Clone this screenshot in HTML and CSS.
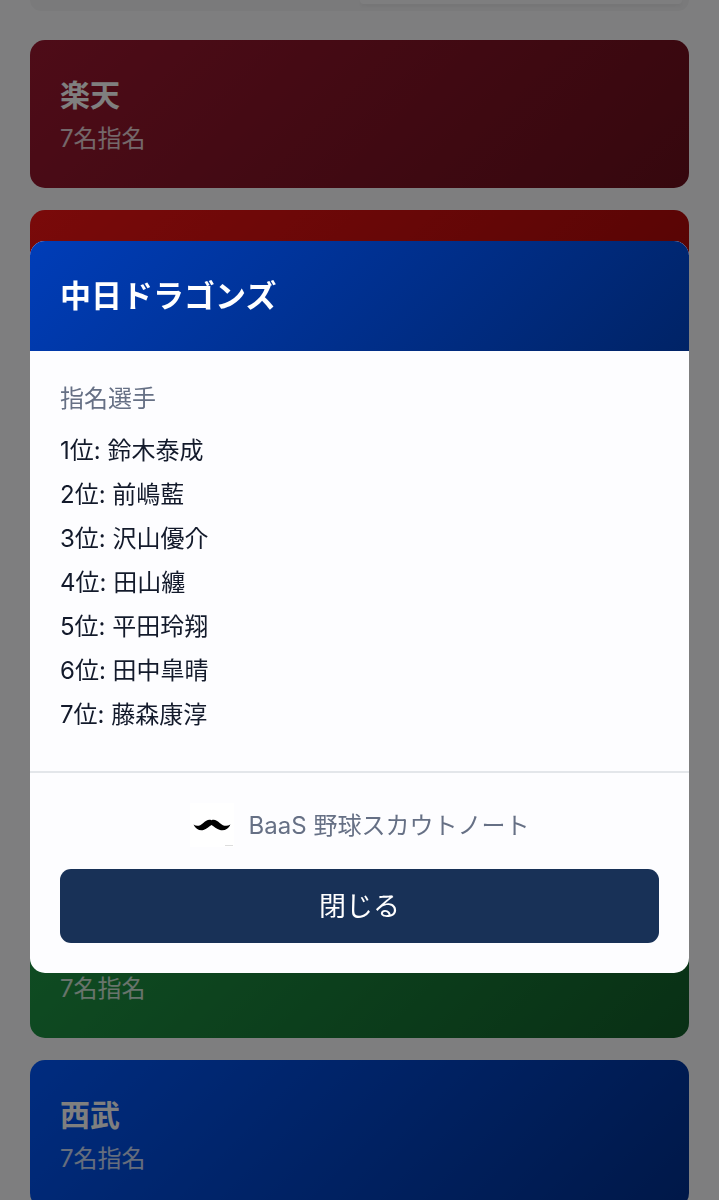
FILE: index.html
```html
<!DOCTYPE html>
<html lang="ja">
  <head>
    <meta charset="UTF-8" />
    <meta name="viewport" content="width=device-width, initial-scale=1.0" />
    <title>BaaS 野球スカウトノート</title>
    <link rel="stylesheet" href="styles.css">
  </head>

  <body>
    <main class="page">
      <div class="tabs">
        <div class="tab"></div>
        <div class="tab active"></div>
      </div>

      <div class="team-list">
        <button type="button" class="team-card eagles">
          <span class="team-name">楽天</span>
          <span class="team-count">7名指名</span>
        </button>
        <button type="button" class="team-card carp"></button>
        <button type="button" class="team-card marines"></button>
        <button type="button" class="team-card dragons"></button>
        <button type="button" class="team-card giants"></button>
        <button type="button" class="team-card swallows">
          <span class="team-name"></span>
          <span class="team-count">7名指名</span>
        </button>
        <button type="button" class="team-card lions">
          <span class="team-name">西武</span>
          <span class="team-count">7名指名</span>
        </button>
      </div>
    </main>

    <div class="overlay">
      <div class="modal" role="dialog" aria-modal="true" aria-labelledby="modal-title">
        <div class="modal-header">
          <h2 id="modal-title">中日ドラゴンズ</h2>
        </div>

        <div class="modal-body">
          <h3>指名選手</h3>
          <ul class="player-list">
            <li>1位: 鈴木泰成</li>
            <li>2位: 前嶋藍</li>
            <li>3位: 沢山優介</li>
            <li>4位: 田山纏</li>
            <li>5位: 平田玲翔</li>
            <li>6位: 田中皐晴</li>
            <li>7位: 藤森康淳</li>
          </ul>
        </div>

        <div class="modal-footer">
          <div class="brand">
            <svg class="brand-logo" viewBox="0 0 44 44" aria-hidden="true">
              <rect width="44" height="44" fill="#fff" />
              <path d="M3.500 21.500C7 23.800 10 22.800 13 20.200C16 17.600 18.500 16 21.500 17.200C24.500 16 27 17.600 30 20.200C33 22.800 36.500 23.800 40.500 21.500C38.500 26 34.500 28 30 27C26.500 26.200 24 23.500 21.500 22C19 23.500 16.500 26.200 13.500 27C9.500 28 5.500 26 3.500 21.500Z" fill="#000" />
              <path d="M35 42.500H43" stroke="#ddd" stroke-width="1" />
            </svg>
            <span class="brand-name">BaaS 野球スカウトノート</span>
          </div>
          <button type="button" class="close-btn">閉じる</button>
        </div>
      </div>
    </div>
  </body>
</html>
```

FILE: styles.css
```css
* {
  box-sizing: border-box;
}

body {
  margin: 0;
  height: 100vh;
  overflow: hidden;
  background-color: #fdfdff;
  color: #131a2b;
  font-family: Inter, "Noto Sans CJK JP", sans-serif;
  font-size: 24px;
}

button {
  border: none;
  font-family: inherit;
  cursor: pointer;
}

.page {
  padding: 0 30px;
}

.tabs {
  display: grid;
  grid-template-columns: 1fr 1fr;
  height: 11px;
  padding: 0 7px 7px;
  margin-bottom: 29px;
  border-radius: 0 0 15px 15px;
  background-color: #f5f5f7;
}

.tab.active {
  border-radius: 0 0 11px 11px;
  background-color: #fdfdff;
  box-shadow: 0 2px 4px rgba(0, 0, 0, 0.06);
}

.team-list {
  display: grid;
  gap: 22px;
}

.team-card {
  display: flex;
  flex-direction: column;
  justify-content: center;
  gap: 2px;
  height: 148px;
  padding: 4px 30px 0;
  border-radius: 15px;
  color: #fff;
  text-align: left;
}

.team-name {
  min-height: 44px;
  font-size: 30px;
  font-weight: bold;
  line-height: 44px;
}

.team-count {
  font-size: 24px;
  line-height: 40px;
  opacity: 0.8;
}

.eagles {
  background: linear-gradient(135deg, #9c1830, #6c0f1c);
}

.carp {
  background: linear-gradient(135deg, #f41414, #a80808);
}

.marines {
  background: linear-gradient(135deg, #333, #111);
}

.dragons {
  background: linear-gradient(135deg, #003db8, #002366);
}

.giants {
  background: linear-gradient(135deg, #f97316, #b04a08);
}

.swallows {
  background: linear-gradient(135deg, #1f9c47, #12602a);
}

.lions {
  background: linear-gradient(135deg, #0058ff, #003090);
}

.overlay {
  position: fixed;
  inset: 0;
  display: flex;
  align-items: center;
  justify-content: center;
  padding: 30px;
  padding-bottom: 16px;
  background-color: rgba(0, 0, 0, 0.5);
}

.modal {
  width: 100%;
  overflow: hidden;
  border-radius: 15px;
  background-color: #fdfdff;
}

.modal-header {
  padding: 30px;
  background: linear-gradient(135deg, #003db8, #002366);
  color: #fff;
}

.modal-header h2 {
  margin: 0;
  font-size: 31px;
  font-weight: bold;
  line-height: 50px;
}

.modal-body {
  padding: 30px;
}

.modal-body h3 {
  margin: 0 0 16px;
  color: #667085;
  font-size: 24px;
  font-weight: normal;
  line-height: 36px;
}

.player-list {
  display: grid;
  gap: 8px;
  margin: 0;
  padding: 0 0 8px;
  list-style: none;
  line-height: 36px;
}

.modal-footer {
  padding: 30px;
  border-top: 2px solid #e3e6ea;
}

.brand {
  display: flex;
  align-items: center;
  justify-content: center;
  gap: 15px;
  margin-bottom: 22px;
  color: #667085;
}

.brand-logo {
  width: 44px;
  height: 44px;
}

.brand-name {
  padding-bottom: 4px;
}

.close-btn {
  display: block;
  width: 100%;
  height: 74px;
  padding: 0 0 4px;
  border-radius: 11px;
  background-color: #183157;
  color: #fff;
  font-size: 27px;
}
```
